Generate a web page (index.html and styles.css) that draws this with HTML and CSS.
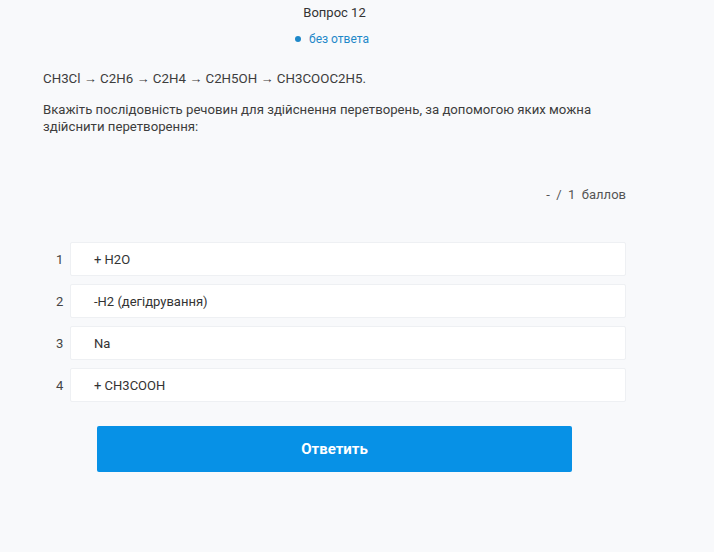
FILE: index.html
```html
<!DOCTYPE html>
<html lang="uk">
<head>
<meta charset="utf-8">
<link rel="stylesheet" href="styles.css">
</head>
<body>
<div class="page">
  <div class="head">
    <div class="title">Вопрос 12</div>
    <div class="status"><span class="dot"></span>без ответа</div>
  </div>
  <p class="formula">CH3Cl <span class="arr">→</span> C2H6 <span class="arr">→</span> C2H4 <span class="arr">→</span> C2H5OH <span class="arr">→</span> CH3COOC2H5.</p>
  <p class="question">Вкажіть послідовність речовин для здійснення перетворень, за допомогою яких можна здійснити перетворення:</p>
  <div class="points">-&nbsp; /&nbsp; 1&nbsp; баллов</div>
  <ol class="items">
    <li class="item"><span class="num">1</span><span class="box">+ H2O</span></li>
    <li class="item"><span class="num">2</span><span class="box">-H2 (дегідрування)</span></li>
    <li class="item"><span class="num">3</span><span class="box">Na</span></li>
    <li class="item"><span class="num">4</span><span class="box">+ CH3COOH</span></li>
  </ol>
  <div class="actions"><button class="submit">Ответить</button></div>
</div>
</body>
</html>
```

FILE: styles.css
```css
html, body {
  margin: 0;
  padding: 0;
  background: #f8f9fb;
}
body {
  font-family: Roboto, "Noto Sans", sans-serif;
  font-size: 13px;
  color: #3d3d3d;
  width: 714px;
  height: 552px;
  overflow: hidden;
}
.page {
  width: 583px;
  margin-left: 43px;
  padding-top: 4px;
}
.head {
  display: flex;
  flex-direction: column;
  align-items: center;
}
.title {
  line-height: 17px;
  color: #333;
}
.status {
  margin-top: 10px;
  font-size: 12px;
  line-height: 16px;
  color: #1e88c9;
  display: flex;
  align-items: center;
  gap: 8px;
  margin-left: -5px;
}
.dot {
  width: 6px;
  height: 6px;
  border-radius: 50%;
  background: #1e88c9;
}
.formula {
  margin: 23px 0 0;
  line-height: 17px;
  font-size: 13.3px;
}
.arr {
  font-family: "Liberation Sans", sans-serif;
  font-size: 13px;
  line-height: 17px;
  vertical-align: top;
}
.question {
  margin: 14px 0 0;
  line-height: 17px;
  font-size: 13.2px;
}
.points {
  margin-top: 51px;
  text-align: right;
  line-height: 17px;
  color: #555;
}
.items {
  list-style: none;
  margin: 39px 0 0;
  padding: 0;
  display: flex;
  flex-direction: column;
  gap: 8px;
}
.item {
  display: flex;
  align-items: center;
}
.num {
  width: 27px;
  padding-left: 13px;
  box-sizing: border-box;
  color: #444;
}
.box {
  flex: 1;
  height: 34px;
  box-sizing: border-box;
  background: #fff;
  border: 1px solid #eef0f3;
  border-radius: 2px;
  display: flex;
  align-items: center;
  padding-left: 23px;
  color: #333;
}
.actions {
  margin-top: 24px;
  display: flex;
  justify-content: center;
}
.submit {
  width: 475px;
  height: 46px;
  border: none;
  border-radius: 2px;
  background: #0791e6;
  color: #fff;
  font-family: Roboto, sans-serif;
  font-weight: bold;
  font-size: 15px;
}
```
